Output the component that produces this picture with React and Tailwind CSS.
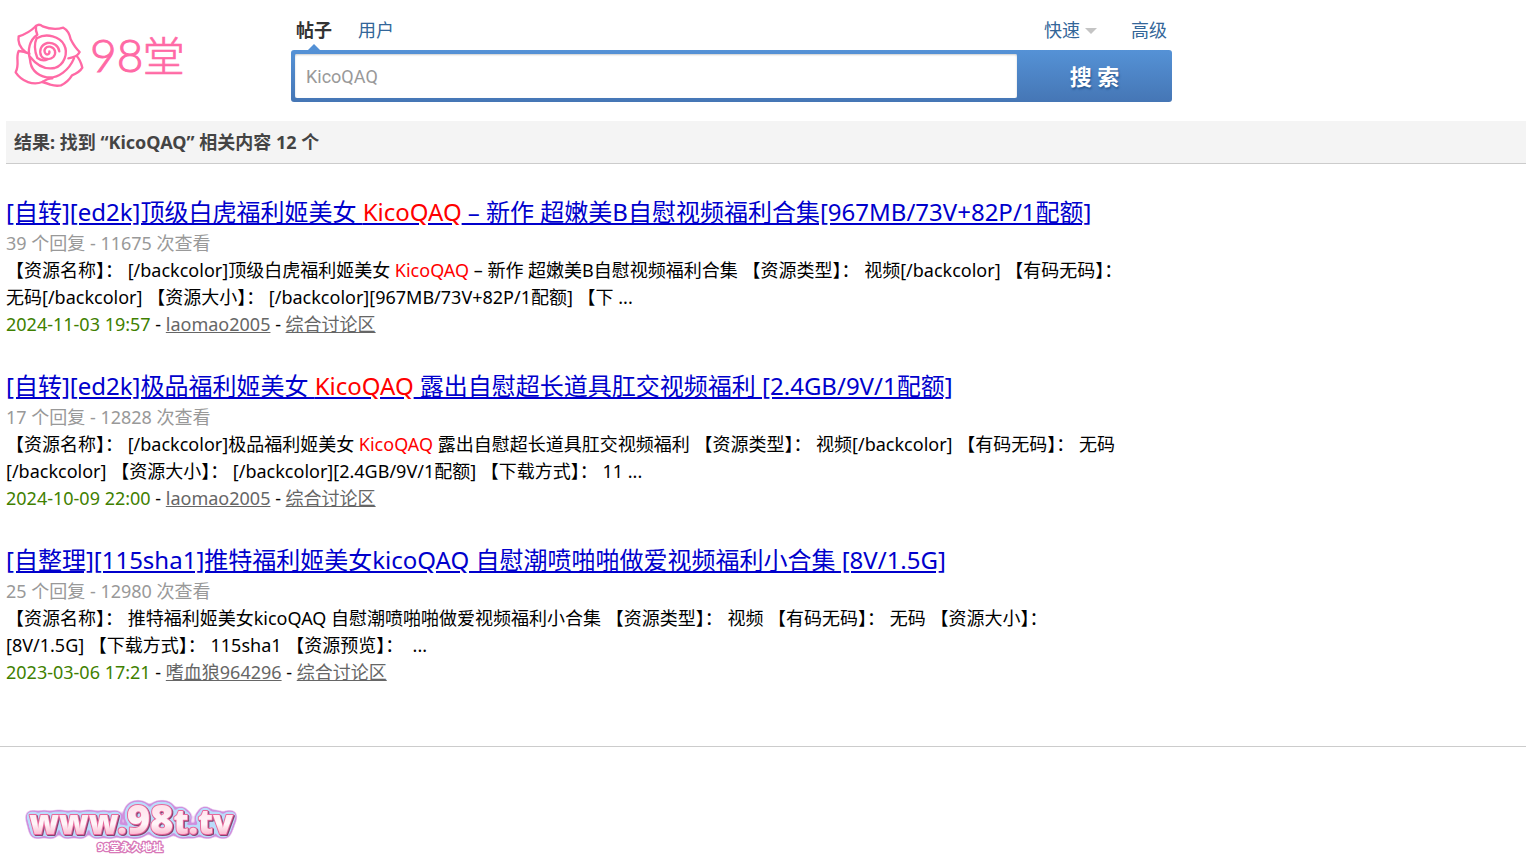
import React, { useState } from "react";

const results = [
  {
    title: (
      <>
        [自转][ed2k]顶级白虎福利姬美女 <Mark>KicoQAQ</Mark> – 新作 超嫩美B自慰视频福利合集[967MB/73V+82P/1配额]
      </>
    ),
    stats: "39 个回复 - 11675 次查看",
    body: (
      <>
        【资源名称】： [/backcolor]顶级白虎福利姬美女 <Mark>KicoQAQ</Mark> – 新作 超嫩美B自慰视频福利合集 【资源类型】： 视频[/backcolor] 【有码无码】：
        <br />
        无码[/backcolor] 【资源大小】： [/backcolor][967MB/73V+82P/1配额] 【下 ...
      </>
    ),
    date: "2024-11-03 19:57",
    author: "laomao2005",
  },
  {
    title: (
      <>
        [自转][ed2k]极品福利姬美女 <Mark>KicoQAQ</Mark> 露出自慰超长道具肛交视频福利 [2.4GB/9V/1配额]
      </>
    ),
    stats: "17 个回复 - 12828 次查看",
    body: (
      <>
        【资源名称】： [/backcolor]极品福利姬美女 <Mark>KicoQAQ</Mark> 露出自慰超长道具肛交视频福利 【资源类型】： 视频[/backcolor] 【有码无码】： 无码
        <br />
        [/backcolor] 【资源大小】： [/backcolor][2.4GB/9V/1配额] 【下载方式】： 11 ...
      </>
    ),
    date: "2024-10-09 22:00",
    author: "laomao2005",
  },
  {
    title: "[自整理][115sha1]推特福利姬美女kicoQAQ 自慰潮喷啪啪做爱视频福利小合集 [8V/1.5G]",
    stats: "25 个回复 - 12980 次查看",
    body: (
      <>
        【资源名称】： 推特福利姬美女kicoQAQ 自慰潮喷啪啪做爱视频福利小合集 【资源类型】： 视频 【有码无码】： 无码 【资源大小】：
        <br />
        [8V/1.5G] 【下载方式】： 115sha1 【资源预览】：&nbsp; ...
      </>
    ),
    date: "2023-03-06 17:21",
    author: "嗜血狼964296",
  },
];

function Mark({ children }) {
  return <span className="text-[#ff0000]">{children}</span>;
}

const Logo = () => (
  <svg viewBox="0 0 600 270" className="w-[200px] h-[90px]" role="img" aria-label="98堂">
    <g fill="none" stroke="#ff69a5" strokeWidth="7" strokeLinecap="round" strokeLinejoin="round">
      {/* outer petals */}
      <path d="M108 48Q117 40 128 49Q160 62 190 53Q207 62 212 88Q224 112 239 126Q232 141 205 145" />
      <path d="M108 48Q86 70 56 79C52 98 62 114 76 126" />
      <path d="M88 131Q72 124 56 123C46 144 60 162 47 187C66 216 100 226 127 216Q143 205 157 205" />
      <path d="M127 216Q140 219 151 224Q168 229 183 226Q204 216 216 196Q238 188 247 173Q241 149 230 138" />
      {/* inner petals */}
      <path d="M108 48Q106 62 112 74C88 90 82 120 90 148C92 178 112 196 140 202C176 207 208 178 222 145" />
      <path d="M110 84C102 102 104 124 112 144C124 152 136 152 143 147" />
      <path d="M112 84C140 68 180 80 192 104C206 130 192 165 164 174C138 179 112 168 90 140" />
      {/* heart of the rose */}
      <path d="M148 124C150 132 141 137 136 130C129 120 138 108 150 110C166 113 170 130 160 141C150 151 130 148 124 138C116 124 122 104 142 99C160 96 176 108 178 124" />
    </g>
    <text
      x="270"
      y="187"
      fill="#ff69a5"
      stroke="#ff69a5"
      strokeWidth="3"
      className="font-['Lato','Noto_Sans_CJK_SC',sans-serif] font-light text-[138px]"
    >
      98
    </text>
    <text
      x="428"
      y="185"
      fill="#ff69a5"
      stroke="#ff69a5"
      strokeWidth="2"
      className="font-['Noto_Sans_CJK_SC',sans-serif] font-light text-[126px]"
    >
      堂
    </text>
  </svg>
);

const SiteAddress = () => (
  <svg viewBox="0 0 720 213" className="w-[240px] h-[71px]" role="img" aria-label="www.98t.tv 98堂永久地址">
    <defs>
      <linearGradient id="site-fill" x1="0" y1="0" x2="0" y2="1">
        <stop offset="0.3" stopColor="#ffe3ec" />
        <stop offset="0.6" stopColor="#fff6f9" />
        <stop offset="0.85" stopColor="#fba8c4" />
      </linearGradient>
      {/* lilac rim, pale blue halo and a plum drop edge behind the letters */}
      <filter id="site-rim" x="-10%" y="-30%" width="120%" height="160%" colorInterpolationFilters="sRGB">
        <feGaussianBlur in="SourceAlpha" stdDeviation="9" />
        <feComponentTransfer result="outer">
          <feFuncA type="linear" slope="14" intercept="-0.9" />
        </feComponentTransfer>
        <feFlood floodColor="#cf8fdd" />
        <feComposite in2="outer" operator="in" result="rim" />
        <feGaussianBlur in="SourceAlpha" stdDeviation="7" />
        <feComponentTransfer result="middle">
          <feFuncA type="linear" slope="12" intercept="-1.2" />
        </feComponentTransfer>
        <feFlood floodColor="#b9dcfb" />
        <feComposite in2="middle" operator="in" result="halo" />
        <feOffset in="SourceAlpha" dx="4" dy="2" result="moved" />
        <feFlood floodColor="#84426f" />
        <feComposite in2="moved" operator="in" result="edge" />
        <feMerge>
          <feMergeNode in="rim" />
          <feMergeNode in="halo" />
          <feMergeNode in="edge" />
          <feMergeNode in="SourceGraphic" />
        </feMerge>
      </filter>
    </defs>
    <text
      x="58"
      y="132"
      fill="url(#site-fill)"
      stroke="#e8699c"
      strokeWidth="6"
      strokeLinejoin="round"
      paintOrder="stroke"
      filter="url(#site-rim)"
      className="font-['Noto_Sans',sans-serif] font-black text-[98px]"
    >
      www.<tspan className="text-[120px]">98</tspan>t.tv
    </text>
    <text
      x="262"
      y="184"
      fill="#fff"
      stroke="#d878b8"
      strokeWidth="8"
      strokeLinejoin="round"
      paintOrder="stroke"
      className="font-['Noto_Sans','Noto_Sans_CJK_SC',sans-serif] font-bold text-[32px]"
    >
      98堂永久地址
    </text>
  </svg>
);

const SearchForm = () => {
  const [keyword, setKeyword] = useState("KicoQAQ");

  return (
    <form className="w-[881px] pt-[17px]" onSubmit={(e) => e.preventDefault()}>
      <div className="flex items-start justify-between px-[5px] h-[33px] leading-[27px]">
        <div className="flex gap-[26px]">
          <a href="#" className="relative font-bold text-[#333]">
            帖子
            <svg viewBox="0 0 12 6" className="absolute left-3 top-[27px] w-3 h-[6px]">
              <path d="M6 0L12 6H0Z" fill="#5390d5" />
            </svg>
          </a>
          <a href="#" className="text-[#336699]">用户</a>
        </div>
        <div className="flex gap-[34px] text-[#336699]">
          <a href="#" className="flex items-center gap-[5px]">
            快速
            <svg viewBox="0 0 12 6" className="w-3 h-[6px]">
              <path d="M0 0H12L6 6Z" fill="#c4c4c4" />
            </svg>
          </a>
          <a href="#">高级</a>
        </div>
      </div>
      <div className="flex h-[52px] rounded-[3px] p-1 pr-0 bg-linear-to-b from-[#5592d6] to-[#4576b5]">
        <input
          type="text"
          aria-label="关键词"
          value={keyword}
          onChange={(e) => setKeyword(e.target.value)}
          className="flex-1 h-11 px-[11px] rounded-[2px] bg-white text-[#999] font-['Roboto','Noto_Sans_CJK_SC',sans-serif] outline-none shadow-[inset_0_1px_2px_#ccc]"
        />
        <button
          type="submit"
          className="w-[155px] font-bold text-[22px] text-white text-shadow-[1px_2px_2px_#2b5a94]"
        >
          搜 索
        </button>
      </div>
    </form>
  );
};

const Result = ({ title, stats, body, date, author }) => (
  <li>
    <h3 className="text-2xl leading-9">
      <a href="#" className="text-[#0000cc] underline">{title}</a>
    </h3>
    <p className="text-[#999]">{stats}</p>
    <p>{body}</p>
    <p>
      <span className="text-[#408000]">{date}</span>
      {" - "}
      <a href="#" className="text-[#666] underline">{author}</a>
      {" - "}
      <a href="#" className="text-[#666] underline">综合讨论区</a>
    </p>
  </li>
);

export default function App() {
  return (
    <div className="bg-white text-black text-[18px] leading-[27px] font-['Noto_Sans','Noto_Sans_CJK_SC',sans-serif]">
      <header className="flex gap-[91px] h-[121px]">
        <a href="#" className="pt-[10px]">
          <Logo />
        </a>
        <SearchForm />
      </header>

      <main className="pl-[6px]">
        <h2 className="px-2 pt-2 h-[43px] border-b border-[#ccc] bg-[#f4f4f4] text-[#444] font-bold">
          结果: 找到 “KicoQAQ” 相关内容 12 个
        </h2>
        <ul className="flex flex-col gap-[30px] pt-[30px] pb-[60px]">
          {results.map((item) => (
            <Result key={item.stats} {...item} />
          ))}
        </ul>
      </main>

      <footer className="border-t border-[#ccc] pt-[43px] pl-[10px]">
        <a href="#" className="block w-[240px]">
          <SiteAddress />
        </a>
      </footer>
    </div>
  );
}
